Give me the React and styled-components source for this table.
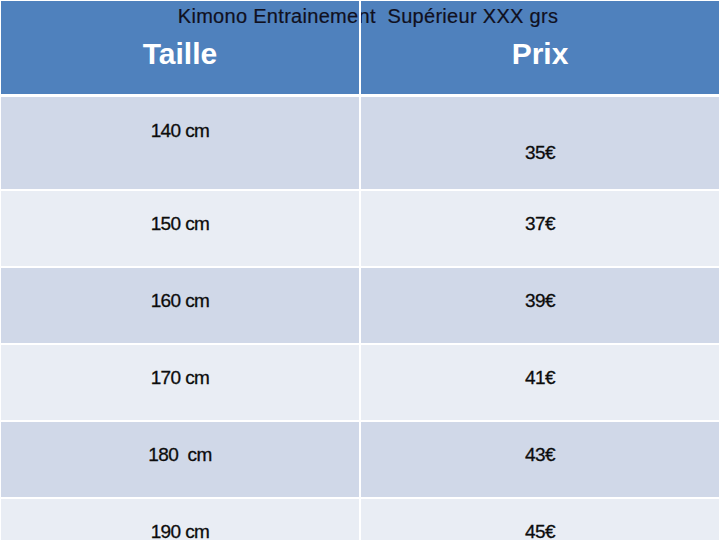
import React from "react";
import styled, { createGlobalStyle } from "styled-components";

const Global = createGlobalStyle`
  html, body { margin: 0; padding: 0; background: #ffffff; }
  #root { width: 720px; height: 540px; }
`;

const Sheet = styled.div`
  width: 720px;
  height: 540px;
  box-sizing: border-box;
  padding: 1px 1px 0 1px;
  background: #ffffff;
  overflow: hidden;
  display: flex;
  flex-direction: column;
  gap: 2px;
  font-family: "Liberation Sans", Arial, sans-serif;
`;

const Header = styled.div`
  position: relative;
  height: 93px;
  flex: none;
  margin-bottom: 1px;
  display: grid;
  grid-template-columns: 358px 1fr;
  background: #4f81bd;
`;

const Title = styled.div`
  position: absolute;
  top: 3px;
  left: 0;
  right: 0;
  padding-left: 16px;
  text-align: center;
  font-size: 20px;
  line-height: 24px;
  letter-spacing: 0.3px;
  color: #10101e;
  white-space: pre;
  -webkit-text-stroke: 0.2px #10101e;
  z-index: 0;
`;

const HeadCell = styled.div`
  position: relative;
  z-index: 1;
  padding-top: 35px;
  text-align: center;
  font-size: 30px;
  line-height: 36px;
  font-weight: bold;
  color: #ffffff;
  border-left: ${(p) => (p.$divider ? "2px solid #ffffff" : "none")};
`;

const Row = styled.div`
  flex: none;
  height: ${(p) => p.$h}px;
  display: grid;
  grid-template-columns: 358px 1fr;
  column-gap: 2px;
`;

const Cell = styled.div`
  background: ${(p) => (p.$shade ? "#d0d8e8" : "#e9edf4")};
  padding-top: ${(p) => p.$pad}px;
  text-align: center;
  font-size: 19px;
  line-height: 22px;
  letter-spacing: -0.6px;
  color: #0c0c0c;
  -webkit-text-stroke: 0.3px #0c0c0c;
  white-space: pre;
`;

const rows = [
  ["150 cm", "37€"],
  ["160 cm", "39€"],
  ["170 cm", "41€"],
  ["180  cm", "43€"],
  ["190 cm", "45€"],
];

export default function App() {
  return (
    <>
      <Global />
      <Sheet>
        <Header>
          <Title>{"Kimono Entrainement  Supérieur XXX grs"}</Title>
          <HeadCell>Taille</HeadCell>
          <HeadCell $divider>Prix</HeadCell>
        </Header>
        <Row $h={92}>
          <Cell $shade $pad={23}>140 cm</Cell>
          <Cell $shade $pad={45}>35€</Cell>
        </Row>
        {rows.map(([size, price], i) => (
          <Row key={size} $h={75}>
            <Cell $shade={i % 2 === 1} $pad={22}>{size}</Cell>
            <Cell $shade={i % 2 === 1} $pad={22}>{price}</Cell>
          </Row>
        ))}
      </Sheet>
    </>
  );
}
